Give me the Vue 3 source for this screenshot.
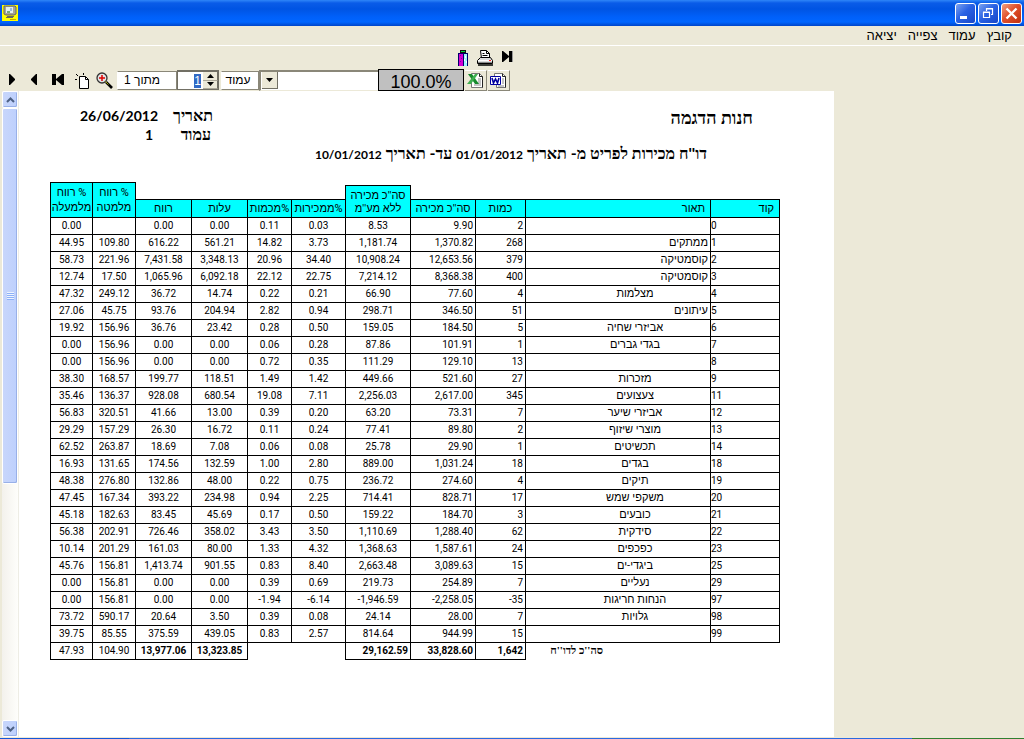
<script setup>
import { onMounted, ref } from 'vue'

const menus = ['קובץ', 'עמוד', 'צפייה', 'יציאה']
const page = ref('1')
const pageInput = ref(null)

const columns = [
  { key: 'code', lines: ['קוד'] },
  { key: 'name', lines: ['תאור'] },
  { key: 'qty', lines: ['כמות'] },
  { key: 'gross', lines: ["סה''כ מכירה"] },
  { key: 'net', lines: ["סה''כ מכירה", "ללא מע''מ"] },
  { key: 'salesPct', lines: ['%ממכירות'] },
  { key: 'qtyPct', lines: ['%מכמות'] },
  { key: 'cost', lines: ['עלות'] },
  { key: 'profit', lines: ['רווח'] },
  { key: 'below', lines: ['% רווח', 'מלמטה'] },
  { key: 'above', lines: ['% רווח', 'מלמעלה'] },
]

const rows = [
  ['0', '', '2', '9.90', '8.53', '0.03', '0.11', '0.00', '0.00', '', '0.00'],
  ['1', 'ממתקים', '268', '1,370.82', '1,181.74', '3.73', '14.82', '561.21', '616.22', '109.80', '44.95'],
  ['2', 'קוסמטיקה', '379', '12,653.56', '10,908.24', '34.40', '20.96', '3,348.13', '7,431.58', '221.96', '58.73'],
  ['3', 'קוסמטיקה', '400', '8,368.38', '7,214.12', '22.75', '22.12', '6,092.18', '1,065.96', '17.50', '12.74'],
  ['4', 'מצלמות', '4', '77.60', '66.90', '0.21', '0.22', '14.74', '36.72', '249.12', '47.32'],
  ['5', 'עיתונים', '51', '346.50', '298.71', '0.94', '2.82', '204.94', '93.76', '45.75', '27.06'],
  ['6', 'אביזרי שחיה', '5', '184.50', '159.05', '0.50', '0.28', '23.42', '36.76', '156.96', '19.92'],
  ['7', 'בגדי גברים', '1', '101.91', '87.86', '0.28', '0.06', '0.00', '0.00', '156.96', '0.00'],
  ['8', '', '13', '129.10', '111.29', '0.35', '0.72', '0.00', '0.00', '156.96', '0.00'],
  ['9', 'מזכרות', '27', '521.60', '449.66', '1.42', '1.49', '118.51', '199.77', '168.57', '38.30'],
  ['11', 'צעצועים', '345', '2,617.00', '2,256.03', '7.11', '19.08', '680.54', '928.08', '136.37', '35.46'],
  ['12', 'אביזרי שיער', '7', '73.31', '63.20', '0.20', '0.39', '13.00', '41.66', '320.51', '56.83'],
  ['13', 'מוצרי שיזוף', '2', '89.80', '77.41', '0.24', '0.11', '16.72', '26.30', '157.29', '29.29'],
  ['14', 'תכשיטים', '1', '29.90', '25.78', '0.08', '0.06', '7.08', '18.69', '263.87', '62.52'],
  ['18', 'בגדים', '18', '1,031.24', '889.00', '2.80', '1.00', '132.59', '174.56', '131.65', '16.93'],
  ['19', 'תיקים', '4', '274.60', '236.72', '0.75', '0.22', '48.00', '132.86', '276.80', '48.38'],
  ['20', 'משקפי שמש', '17', '828.71', '714.41', '2.25', '0.94', '234.98', '393.22', '167.34', '47.45'],
  ['21', 'כובעים', '3', '184.70', '159.22', '0.50', '0.17', '45.69', '83.45', '182.63', '45.18'],
  ['22', 'סידקית', '62', '1,288.40', '1,110.69', '3.50', '3.43', '358.02', '726.46', '202.91', '56.38'],
  ['23', 'כפכפים', '24', '1,587.61', '1,368.63', '4.32', '1.33', '80.00', '161.03', '201.29', '10.14'],
  ['25', 'ביגדי-ים', '15', '3,089.63', '2,663.48', '8.40', '0.83', '901.55', '1,413.74', '156.81', '45.76'],
  ['29', 'נעליים', '7', '254.89', '219.73', '0.69', '0.39', '0.00', '0.00', '156.81', '0.00'],
  ['97', 'הנחות חריגות', '-35', '-2,258.05', '-1,946.59', '-6.14', '-1.94', '0.00', '0.00', '156.81', '0.00'],
  ['98', 'גלויות', '7', '28.00', '24.14', '0.08', '0.39', '3.50', '20.64', '590.17', '73.72'],
  ['99', '', '15', '944.99', '814.64', '2.57', '0.83', '439.05', '375.59', '85.55', '39.75'],
]

const totals = ['', "סה''כ לדו''ח", '1,642', '33,828.60', '29,162.59', '', '', '13,323.85', '13,977.06', '104.90', '47.93']
const flushNames = ['1', '2', '3', '5']

onMounted(() => {
  pageInput.value.focus()
  pageInput.value.select()
})
</script>

<template>
  <div class="window">
    <header class="titlebar">
      <svg class="appicon" width="16" height="16" viewBox="0 0 16 16" aria-hidden="true">
        <rect width="16" height="16" fill="#ff0" />
        <path d="M2 1h11l1 1v7l-2 1H4L2 9z" fill="#a8a498" stroke="#6a675c" />
        <path d="M4 2h7v6H4z" fill="#e4f0ee" />
        <path d="M5 6h3v2H5z" fill="#78a878" /><path d="M8 3h2v3H8z" fill="#9cb8e0" />
        <path d="M5 11h7v1H5zM4 12h7v1H4z" fill="#6a675c" />
        <path d="M8 14h6v1H8z" fill="#c8a800" />
      </svg>
      <div class="winbtns">
        <button class="winbtn" aria-label="מזער">
          <svg width="19" height="19" viewBox="0 0 19 19"><path d="M4 12h7v3H4z" fill="#fff" /></svg>
        </button>
        <button class="winbtn" aria-label="שחזר">
          <svg width="19" height="19" viewBox="0 0 19 19"><path d="M4.500 8.500h6v5h-6zM4 8h7M7.500 7V4.500h6v6H12M7 5h7" fill="none" stroke="#fff" stroke-width="1.200" /></svg>
        </button>
        <button class="winbtn close" aria-label="סגור">
          <svg width="19" height="19" viewBox="0 0 19 19"><path d="M4.500 4.500l10 10M14.500 4.500l-10 10" stroke="#fff" stroke-width="2.400" /></svg>
        </button>
      </div>
    </header>

    <nav class="menubar" dir="rtl">
      <button v-for="m in menus" :key="m" class="menu">{{ m }}</button>
    </nav>

    <div class="toolbar">
      <div class="toolrow upper">
        <button class="tool" aria-label="יציאה">
          <svg width="11" height="16" viewBox="0 0 11 16" shape-rendering="crispEdges">
            <path d="M2 0h6v3H2z" fill="#111" /><path d="M3 1h4v1H3z" fill="#0d4" />
            <path d="M0 3h10v13H0z" fill="#00006a" /><path d="M1 4h4v12H1z" fill="#d400d4" />
            <path d="M6 4h3v12H6z" fill="#9ef4ff" /><path d="M7 6h1v2H7zM6 9h1v2H6zM8 11h1v2H8z" fill="#fff" />
            <path d="M2 5h1v1H2zM3 8h1v1H3zM2 11h1v1H2z" fill="#70a" />
          </svg>
        </button>
        <button class="tool" aria-label="הדפס">
          <svg width="17" height="16" viewBox="0 0 17 16">
            <path d="M4.500 8.500l-1-8h6l3 3v5" fill="#fff" stroke="#000" />
            <path d="M9.500.5v3h3M5.500 3.500h2M5.500 5.500h5" fill="none" stroke="#000" />
            <path d="M3.500 7.500h10l2 3v3H.5v-3z" fill="#ddd" stroke="#000" />
            <path d="M1 10.500h14" stroke="#fff" /><path d="M1 12.500h14" stroke="#888" />
            <path d="M12 10h2v1h-2z" fill="#f22" /><path d="M1 15h15" stroke="#000" stroke-width="1.500" />
          </svg>
        </button>
        <button class="tool last" aria-label="עמוד אחרון">
          <svg width="12" height="13" viewBox="0 0 12 13"><path d="M0 1h1l6 5V1h3v11H7V7l-6 5H0z" fill="#000" /><path d="M10.500 1v11" stroke="#999" /></svg>
        </button>
      </div>

      <div class="toolrow lower">
        <div class="nav">
          <button class="tool" aria-label="העמוד הבא">
            <svg width="8" height="12" viewBox="0 0 8 12"><path d="M1 0h1l5 5v1L2 11H1z" /></svg>
          </button>
          <button class="tool" aria-label="העמוד הקודם">
            <svg width="8" height="12" viewBox="0 0 8 12"><path d="M7 0H6L1 5v1l5 5h1z" /></svg>
          </button>
          <button class="tool" aria-label="עמוד ראשון">
            <svg width="13" height="12" viewBox="0 0 13 12"><path d="M0 0h4v5L10 0h2v11h-2L4 6v5H0z" /></svg>
          </button>
          <button class="tool low" aria-label="עמוד שלם">
            <svg width="15" height="16" viewBox="0 0 15 16">
              <path d="M4.500 3.500h6l3 3v9h-9z" fill="#fff" stroke="#000" />
              <path d="M10.500 3.500v3h3" fill="none" stroke="#000" />
              <path d="M1 1l2 2M0 6.500h2M8.500 0v2" stroke="#000" />
            </svg>
          </button>
          <button class="tool" aria-label="הגדל תצוגה">
            <svg width="17" height="17" viewBox="0 0 17 17">
              <circle cx="6" cy="6" r="5" fill="#e4e4e4" stroke="#333" stroke-width="1.300" />
              <path d="M6 3v6M3 6h6" stroke="#d00" stroke-width="1.500" />
              <path d="M10 10l6 6" stroke="#000" stroke-width="2.600" /><path d="M9.500 9.500l3 3" stroke="#a8a800" />
            </svg>
          </button>
        </div>

        <span class="panel of" dir="rtl">מתוך 1</span>
        <div class="spin">
          <input ref="pageInput" v-model="page" class="spininput" type="text" inputmode="numeric" aria-label="מספר עמוד">
          <div class="spinbtns">
            <button class="spinbtn" aria-label="הגדל"><svg width="7" height="4" viewBox="0 0 7 4"><path d="M0 4l3.500-4L7 4z" /></svg></button>
            <button class="spinbtn" aria-label="הקטן"><svg width="7" height="4" viewBox="0 0 7 4"><path d="M0 0l3.500 4L7 0z" /></svg></button>
          </div>
        </div>
        <span class="panel word" dir="rtl">עמוד</span>
        <div class="combo">
          <select class="select" dir="rtl" aria-label="בחירת תצוגה"><option></option></select>
          <span class="arrow"><svg width="7" height="4" viewBox="0 0 7 4"><path d="M0 0h7L3.500 4z" /></svg></span>
        </div>
        <output class="zoom">100.0%</output>
        <button class="export" aria-label="ייצוא לאקסל">
          <svg width="17" height="17" viewBox="0 0 17 17">
            <path d="M4.500 1.500h8l3 3v11h-11z" fill="#fff" stroke="#777" /><path d="M12.500 1.500v3h3v11" fill="none" stroke="#222" />
            <path d="M11 7h3M11 9h3M11 11h3M7 13h7" stroke="#888" />
            <path d="M1 2h4l7 10H8z" fill="#168a2c" /><path d="M11 2H8L0 12h4z" fill="#3fae50" />
          </svg>
        </button>
        <button class="export" aria-label="ייצוא לוורד">
          <svg width="17" height="17" viewBox="0 0 17 17">
            <path d="M4.500 4V1.500h8l3 3v11h-9V13" fill="#fff" stroke="#777" /><path d="M12.500 1.500v3h3v11" fill="none" stroke="#222" />
            <path d="M12 7h2M12 9h2M12 11h2M8 14h6" stroke="#888" />
            <path d="M.5 4.500h10v8H.5z" fill="#fff" stroke="#0000a0" />
            <path d="M2 6l1.500 5L5.500 7l2 4L9 6" fill="none" stroke="#0000a0" stroke-width="1.600" />
          </svg>
        </button>
      </div>
    </div>

    <main class="workspace">
      <div class="scrollbar">
        <button class="scrollbtn" aria-label="גלול למעלה"><svg width="9" height="6" viewBox="0 0 9 6"><path d="M1 5l3.500-3.500L8 5" fill="none" stroke="#4d6185" stroke-width="2" /></svg></button>
        <div class="thumb"><i v-for="n in 4" :key="n" class="grip"></i></div>
        <div class="track"></div>
        <button class="scrollbtn" aria-label="גלול למטה"><svg width="9" height="6" viewBox="0 0 9 6"><path d="M1 1l3.500 3.500L8 1" fill="none" stroke="#4d6185" stroke-width="2" /></svg></button>
      </div>

      <article class="sheet" dir="rtl">
        <div class="heading">
          <h1 class="shop">חנות הדגמה</h1>
          <dl class="meta">
            <dt>תאריך</dt><dd>26/06/2012</dd>
            <dt class="inset">עמוד</dt><dd class="pageno">1</dd>
          </dl>
        </div>
        <h2 class="subtitle">דו''ח מכירות לפריט מ- תאריך <time>01/01/2012</time> עד- תאריך <time>10/01/2012</time></h2>

        <table class="report">
          <colgroup><col v-for="c in columns" :key="c.key" :class="'w-' + c.key"></colgroup>
          <thead>
            <tr>
              <th v-for="c in columns" :key="c.key" scope="col">
                <div class="head" :class="'h-' + c.key"><span v-for="l in c.lines" :key="l">{{ l }}</span></div>
              </th>
            </tr>
          </thead>
          <tbody>
            <tr v-for="r in rows" :key="r[0]">
              <td v-for="(v, i) in r" :key="i" :class="['c-' + columns[i].key, { flush: i === 1 && flushNames.includes(r[0]) }]"><bdi>{{ v }}</bdi></td>
            </tr>
          </tbody>
          <tfoot>
            <tr>
              <td v-for="(v, i) in totals" :key="i" :class="['c-' + columns[i].key, 't-' + columns[i].key]"><bdi>{{ v }}</bdi></td>
            </tr>
          </tfoot>
        </table>
      </article>
    </main>
    <footer class="taskedge"><i class="edge-a"></i><i class="edge-b"></i><i class="edge-c"></i></footer>
  </div>
</template>

<style>
body { background: #ece9d8; }
</style>

<style scoped>
.window {
  min-height: 100vh;
  display: flex;
  flex-direction: column;
  background: #ece9d8;
  font-family: "Liberation Sans", Arial, sans-serif;
  font-size: 12px;
  color: #000;
}
button { padding: 0; border: 0; background: none; font: inherit; color: inherit; }
svg { display: block; }

.titlebar {
  height: 26px;
  box-sizing: border-box;
  padding: 0 2px;
  display: flex;
  align-items: center;
  justify-content: space-between;
  background: linear-gradient(#2f86f8 0, #0a5ce8 3px, #0054e3 9px, #0060fa 17px, #0066ff 22px, #0045c8 26px);
}
.winbtns { display: flex; gap: 2px; }
.winbtn {
  width: 21px;
  height: 21px;
  box-sizing: border-box;
  border: 1px solid #fff;
  border-radius: 3px;
  background: linear-gradient(135deg, #7ba2f0, #2a62e4 45%, #1746c8);
}
.winbtn.close { background: linear-gradient(135deg, #f0a080, #e0502c 45%, #c03010); }

.menubar {
  height: 19px;
  padding: 0 12px;
  display: flex;
  align-items: center;
  gap: 11px;
  border-bottom: 1px solid #fff;
}
.menu { font-size: 13px; line-height: 16px; }

.toolbar { height: 45px; width: max-content; display: flex; flex-direction: column; }
.toolrow { display: flex; align-items: center; }
.upper { height: 23px; justify-content: flex-end; gap: 8px; margin-right: -4px; }
.lower { height: 22px; }
.nav { display: flex; align-items: center; gap: 14px; padding-left: 8px; }
.nav .tool:nth-child(4) { margin-left: -4px; }
.nav .tool:nth-child(5) { margin-left: -8px; margin-right: 4px; }
.low { margin-top: 2px; }
.last { margin-bottom: 2px; }
.panel {
  height: 19px;
  line-height: 17px;
  box-sizing: border-box;
  background: #fff;
  border: 1px solid #8a8778;
  border-left-color: #fff;
  text-align: center;
}
.of { width: 60px; padding-right: 10px; }
.word { width: 38px; padding-right: 4px; }
.spin {
  width: 42px;
  height: 20px;
  box-sizing: border-box;
  margin-right: 2px;
  display: flex;
  background: #fff;
  border: 1px solid #716f64;
  border-width: 2px 1px 1px 1px;
}
.spininput {
  flex: 1;
  min-width: 0;
  padding: 0 2px 0 0;
  border: 0;
  outline: 0;
  background: none;
  font: inherit;
  text-align: right;
}
.spininput::selection { background: #316ac5; color: #fff; }
.spinbtns { width: 15px; display: flex; flex-direction: column; }
.spinbtn {
  flex: 1;
  display: flex;
  align-items: center;
  justify-content: center;
  background: #ece9d8;
  border-right: 1px solid #716f64;
  border-bottom: 1px solid #aca899;
}
.combo {
  position: relative;
  width: 119px;
  height: 21px;
  box-sizing: border-box;
  background: #fff;
  border-top: 2px solid #8a8778;
  border-left: 2px solid #8a8778;
  border-bottom: 1px solid #ece9d8;
}
.select { width: 100%; height: 100%; border: 0; appearance: none; background: none; }
.arrow {
  position: absolute;
  left: 1px;
  top: 0;
  width: 15px;
  height: 16px;
  display: flex;
  align-items: center;
  justify-content: center;
  background: #ece9d8;
  border-right: 1px solid #716f64;
  border-bottom: 1px solid #716f64;
  pointer-events: none;
}
.zoom {
  width: 86px;
  height: 22px;
  line-height: 24px;
  box-sizing: border-box;
  border: 1px solid #000;
  background: #c0c0c0;
  font-size: 18px;
  text-align: center;
}
.export {
  width: 22px;
  height: 21px;
  margin-left: 1px;
  display: flex;
  align-items: center;
  justify-content: center;
  background: #ece9d8;
  border-top: 1px solid #fff;
  border-right: 1px solid #8a8778;
  border-bottom: 1px solid #8a8778;
}

.workspace {
  flex: 1;
  display: grid;
  grid-template-columns: 17px 815fr 190fr;
  padding-left: 2px;
}
.scrollbar {
  display: flex;
  flex-direction: column;
  box-sizing: border-box;
  border-right: 1px solid #eeede5;
  background: linear-gradient(90deg, #f3f1ec, #fefefb);
}
.scrollbtn, .thumb {
  box-sizing: border-box;
  border: 1px solid #fff;
  border-radius: 2px;
  background: linear-gradient(90deg, #c8d6fb, #bdd0fd);
  box-shadow: inset -1px -1px 0 #98b0e8;
  display: flex;
  align-items: center;
  justify-content: center;
}
.scrollbtn { height: 17px; }
.thumb { flex: 375; flex-direction: column; gap: 1px; }
.track { flex: 237; }
.grip { width: 7px; height: 1px; background: #eef4fe; border-bottom: 1px solid #8cb0f8; margin-bottom: -1px; }

.sheet { background: #fff; padding: 15px 54px 60px 31px; }

.heading, .subtitle { font-family: Lato, "Liberation Serif", serif; font-weight: 700; }
.heading { display: flex; justify-content: space-between; padding: 0 27px 0 30px; }
.shop { margin: 2px 0 0; font-size: 18px; line-height: 18px; }
.meta {
  margin: 0;
  display: grid;
  grid-template-columns: auto auto;
  column-gap: 15px;
  line-height: 19px;
}
.meta dt { font-family: "Liberation Serif", serif; font-size: 16px; }
.meta dd { margin: 0; font-size: 14px; }
.inset { padding-right: 2px; }
.pageno { padding-right: 5px; }
.subtitle { margin: 1px 73px 19px 0; font-size: 16px; line-height: 16px; }
.subtitle time { font-size: 12px; }

.report {
  width: 100%;
  table-layout: fixed;
  border-collapse: separate;
  border-spacing: 0;
  font-family: Roboto, "Liberation Sans", sans-serif;
  font-size: 10px;
}
.w-code { width: 70px; }
.w-qty { width: 50px; }
.w-gross, .w-net { width: 65px; }
.w-salesPct { width: 54px; }
.w-qtyPct { width: 44px; }
.w-cost, .w-profit { width: 56px; }
.w-below { width: 43px; }
.w-above { width: 42px; }

th { padding: 0; vertical-align: bottom; font-weight: 400; }
.head {
  margin-right: -1px;
  box-sizing: border-box;
  min-height: 19px;
  padding: 2px 0;
  display: flex;
  flex-direction: column;
  justify-content: flex-end;
  border: 1px solid #000;
  background: #0ff;
  font-size: 11px;
  line-height: 13px;
  white-space: nowrap;
  text-align: center;
}
.h-code { margin-right: 0; padding-right: 5px; text-align: right; }
.h-name { padding-right: 5px; text-align: right; }
.h-net { min-height: 33px; }
.h-below, .h-above { min-height: 36px; line-height: 15px; }

td {
  height: 17px;
  box-sizing: border-box;
  padding: 0 2px;
  border-left: 1px solid #000;
  border-bottom: 1px solid #000;
  line-height: 16px;
  text-align: center;
  white-space: nowrap;
}
.c-code { border-right: 1px solid #000; padding-left: 0; text-align: left; }
.c-name { padding-left: 0; padding-right: 0; padding-left: 34px; font-size: 11px; }
.c-name.flush { padding: 0 2px; text-align: right; }
.c-qty, .c-gross, .t-net { text-align: right; }
.t-code { border: 0; }
.t-name, .t-qtyPct { border-bottom: 0; }
.t-salesPct { border: 0; }
.t-name { padding: 0 107px 4px 0; line-height: 12px; text-align: right; font-family: "Liberation Serif", serif; }
.t-name, .t-qty, .t-gross, .t-net, .t-cost, .t-profit { font-weight: 700; }

.taskedge { display: flex; height: 1px; border-top: 1px solid #ece9d8; }
.edge-a { flex: 129; background: #1458d8; }
.edge-b { flex: 783; background: #2a6ae0; }
.edge-c { flex: 112; background: #2f8030; }
</style>
